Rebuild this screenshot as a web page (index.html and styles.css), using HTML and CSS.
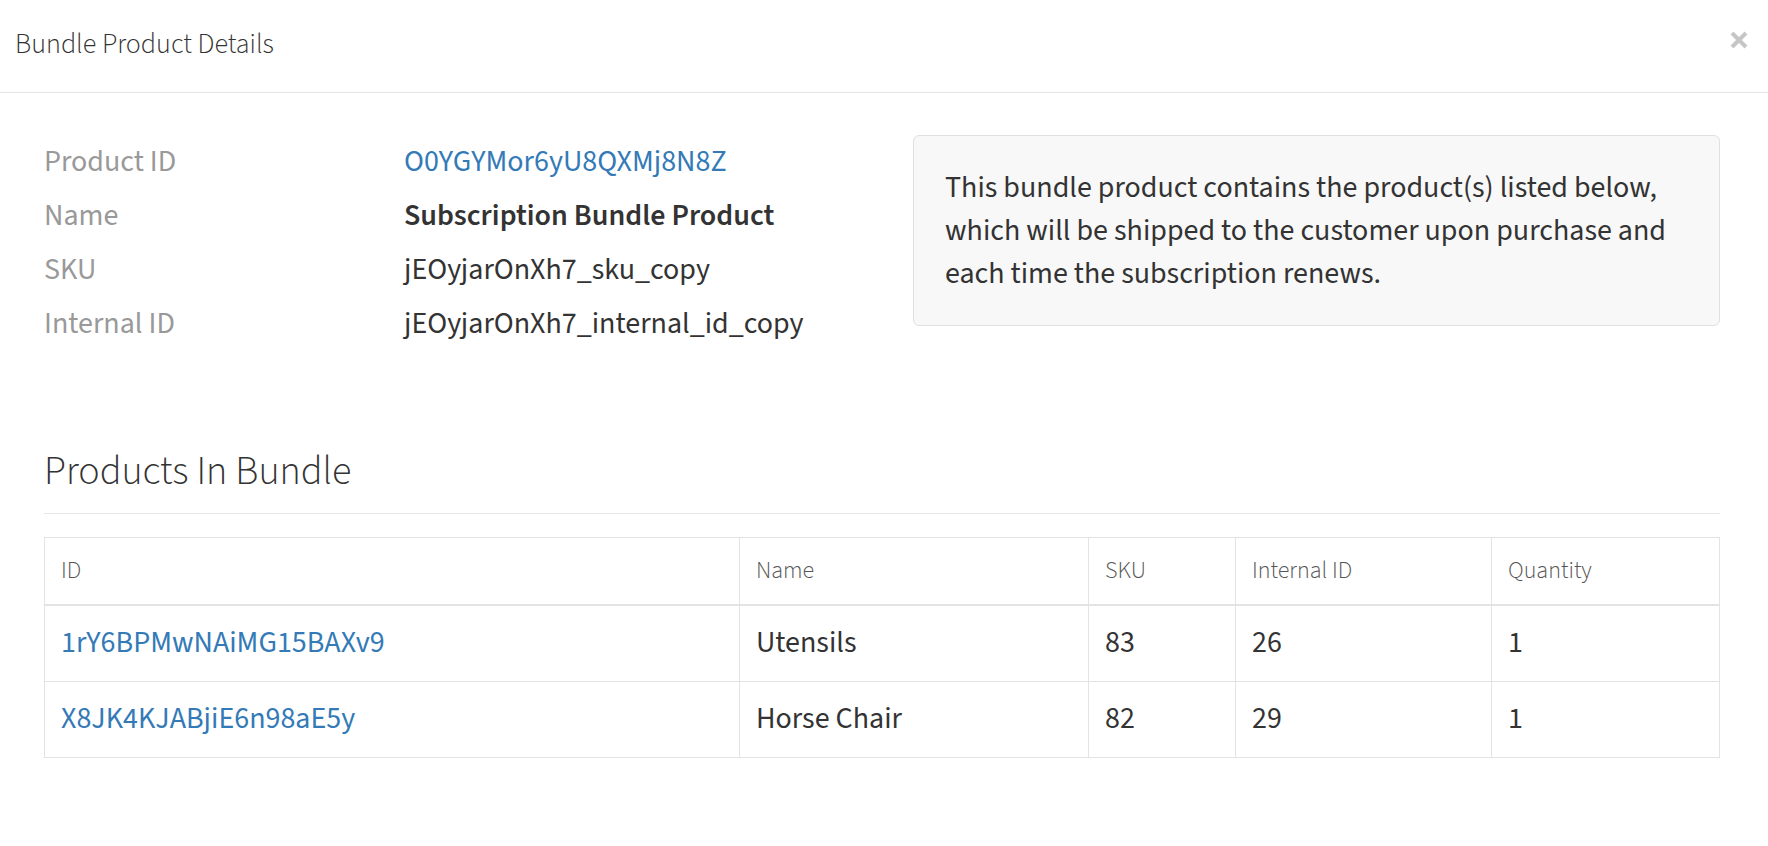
FILE: index.html
```html
<!DOCTYPE html>
<html lang="en">
<head>
<meta charset="utf-8">
<title>Bundle Product Details</title>
<link rel="stylesheet" href="styles.css">
</head>
<body>
<div class="modal">
  <div class="modal-header">
    <h4 class="modal-title">Bundle Product Details</h4>
    <button class="close" type="button" aria-label="Close">
      <svg width="18" height="18" viewBox="0 0 18 18"><path d="M2 2 L16 16 M16 2 L2 16" stroke="#c6c6c6" stroke-width="4" stroke-linecap="butt" fill="none"/></svg>
    </button>
  </div>
  <div class="modal-body">
    <div class="details">
      <dl class="props">
        <dt>Product ID</dt><dd><a href="#" class="link">O0YGYMor6yU8QXMj8N8Z</a></dd>
        <dt>Name</dt><dd class="strong">Subscription Bundle Product</dd>
        <dt>SKU</dt><dd>jEOyjarOnXh7_sku_copy</dd>
        <dt>Internal ID</dt><dd>jEOyjarOnXh7_internal_id_copy</dd>
      </dl>
      <div class="well">This bundle product contains the product(s) listed below, which will be shipped to the customer upon purchase and each time the subscription renews.</div>
    </div>
    <h3 class="section-title">Products In Bundle</h3>
    <table class="products">
      <thead>
        <tr>
          <th class="col-id">ID</th>
          <th class="col-name">Name</th>
          <th class="col-sku">SKU</th>
          <th class="col-internal">Internal ID</th>
          <th class="col-qty">Quantity</th>
        </tr>
      </thead>
      <tbody>
        <tr>
          <td><a href="#" class="link">1rY6BPMwNAiMG15BAXv9</a></td>
          <td>Utensils</td>
          <td>83</td>
          <td>26</td>
          <td>1</td>
        </tr>
        <tr>
          <td><a href="#" class="link">X8JK4KJABjiE6n98aE5y</a></td>
          <td>Horse Chair</td>
          <td>82</td>
          <td>29</td>
          <td>1</td>
        </tr>
      </tbody>
    </table>
  </div>
</div>
</body>
</html>
```
FILE: styles.css
```css
* { box-sizing: border-box; }
html, body { margin: 0; padding: 0; background: #fff; }
body {
  font-family: "Source Sans 3", "Source Sans Pro", Lato, sans-serif;
  font-size: 30px;
  line-height: 1.42857;
  color: #333;
}
.modal { width: 1768px; }

.modal-header {
  display: flex;
  justify-content: space-between;
  align-items: flex-start;
  padding: 24px 20px 28px 15px;
  border-bottom: 1px solid #e5e5e5;
}
.modal-title {
  margin: 0;
  font-size: 28px;
  font-weight: 300;
  line-height: 40px;
  color: #333;
}
.close {
  margin-top: 7px;
  padding: 0;
  border: 0;
  background: transparent;
  width: 18px;
  height: 18px;
  display: block;
  cursor: pointer;
}
.close svg { display: block; }

.modal-body { padding: 42px 48px 0 44px; }

.details { display: flex; align-items: flex-start; }
.props {
  flex: 1;
  margin: 0;
  display: grid;
  grid-template-columns: 360px 1fr;
  line-height: 54px;
}
.props dt { color: #999; font-weight: 400; }
.props dd { margin: 0; color: #333; }
.props dd.strong { font-weight: 600; }

.link { color: #337ab7; text-decoration: none; }

.well {
  width: 807px;
  flex: none;
  background: #f8f8f8;
  border: 1px solid #e0e0e0;
  border-radius: 6px;
  padding: 31px 32px 29px 31px;
  color: #333;
}

.section-title {
  margin: 99px 0 0 0;
  padding: 0 0 19px 0;
  font-size: 40px;
  font-weight: 300;
  line-height: 44px;
  color: #333;
  border-bottom: 1px solid #e8e8e8;
}

.products {
  margin-top: 23px;
  width: 1676px;
  border-collapse: collapse;
  table-layout: fixed;
  border: 1px solid #e3e3e3;
}
.products th, .products td {
  border: 1px solid #e3e3e3;
  padding: 16px 16px;
  text-align: left;
  vertical-align: middle;
}
.products th {
  font-size: 24px;
  font-weight: 300;
  color: #555;
  border-bottom-width: 2px;
}
.products td { font-size: 30px; color: #333; }
.col-id { width: 695px; }
.col-name { width: 349px; }
.col-sku { width: 147px; }
.col-internal { width: 256px; }
```
